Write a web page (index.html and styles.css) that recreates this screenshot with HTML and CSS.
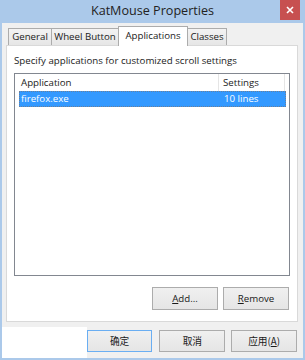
FILE: index.html
```html
<!DOCTYPE html>
<html lang="en">
<head>
  <meta charset="UTF-8" />
  <title>KatMouse Properties</title>
  <link rel="stylesheet" href="styles.css">
</head>
<body>
  <div class="window">
    <div class="titlebar">
      <span class="title">KatMouse Properties</span>
      <button class="close" aria-label="Close">
        <svg width="8" height="8" viewBox="0 0 8 8"><path d="M1 1 L7 7 M7 1 L1 7" stroke="#fff" stroke-width="1.6" /></svg>
      </button>
    </div>

    <div class="client">
      <div class="tabarea">
        <div class="tabs">
          <div class="tab tab-general">General</div>
          <div class="tab tab-wheel">Wheel Button</div>
          <div class="tab tab-apps selected">Applications</div>
          <div class="tab tab-classes">Classes</div>
        </div>

        <div class="panel">
          <div class="hint">Specify applications for customized scroll settings</div>

          <div class="listview">
            <div class="lv-header">
              <div class="col-app">Application</div>
              <div class="col-set">Settings</div>
              <div class="col-rest"></div>
            </div>
            <div class="lv-row selected">
              <div class="col-app">firefox.exe</div>
              <div class="col-set">10 lines</div>
            </div>
          </div>

          <div class="panel-buttons">
            <button class="btn"><u>A</u>dd...</button>
            <button class="btn"><u>R</u>emove</button>
          </div>
        </div>
      </div>

      <div class="footer">
        <div class="blank"></div>
        <button class="btn btn-default cjk">确定</button>
        <button class="btn cjk">取消</button>
        <button class="btn cjk">应用(<u>A</u>)</button>
      </div>
    </div>
  </div>
</body>
</html>
```

FILE: styles.css
```css
body {
  margin: 0;
  font-family: "Open Sans", "Noto Sans CJK SC", sans-serif;
  font-size: 9.7px;
  color: #1a1a1a;
}
.window {
  width: 305px;
  height: 360px;
  box-sizing: border-box;
  padding: 0 2px 2px 2px;
  background-color: #abc9ea;
  display: flex;
  flex-direction: column;
}
.titlebar {
  height: 23px;
  margin: 0 -2px;
  display: flex;
  align-items: center;
  justify-content: center;
  position: relative;
}
.title {
  font-size: 12.6px;
  color: #222;
  margin-top: -2px;
}
.close {
  position: absolute;
  top: 0;
  right: 5px;
  width: 20px;
  height: 20px;
  padding: 0;
  border: none;
  background-color: #c75050;
  display: flex;
  align-items: center;
  justify-content: center;
}
.client {
  flex: 1;
  background-color: #f0f0f0;
  display: flex;
  flex-direction: column;
}
.tabarea {
  padding: 3px 5px 0 4px;
}
.tabs {
  display: flex;
  align-items: flex-end;
  height: 19px;
  padding-left: 2px;
}
.tab {
  box-sizing: border-box;
  height: 17px;
  border: 1px solid #acacac;
  border-bottom: none;
  margin-right: -1px;
  background: linear-gradient(#f3f3f3, #e6e6e6);
  text-align: center;
  line-height: 16px;
}
.tab-general { width: 44px; }
.tab-wheel { width: 68px; }
.tab-apps { width: 70px; }
.tab-classes { width: 40px; }
.tab.selected {
  height: 20px;
  margin-bottom: -1px;
  background: #fff;
  position: relative;
  z-index: 1;
  line-height: 17px;
}
.panel {
  height: 277px;
  box-sizing: border-box;
  border: 1px solid #d9d9d9;
  background-color: #fff;
  padding: 7px 7px 0 7px;
}
.hint {
  height: 15px;
  line-height: 15px;
}
.listview {
  margin-top: 5px;
  height: 203px;
  box-sizing: border-box;
  border: 1px solid #828790;
}
.lv-header {
  display: flex;
  height: 17px;
  line-height: 17px;
}
.lv-header > div {
  border-right: 1px solid #e5e5e5;
}
.col-app {
  box-sizing: border-box;
  width: 204px;
  padding-left: 6px;
}
.col-set {
  box-sizing: border-box;
  width: 66px;
  padding-left: 4px;
}
.lv-header .col-rest {
  flex: 1;
  border-right: none;
}
.lv-row {
  display: flex;
  height: 16px;
  line-height: 14px;
  margin-left: 4px;
  width: 267px;
  box-sizing: border-box;
}
.lv-row .col-app {
  width: 199px;
  padding-left: 1px;
}
.lv-row .col-set {
  padding-left: 5px;
}
.lv-row.selected {
  background-color: #3399ff;
  color: #fff;
  border: 1px dotted #6b7f99;
}
.panel-buttons {
  display: flex;
  justify-content: flex-end;
  gap: 5px;
  margin-top: 11px;
  padding-right: 1px;
}
.btn {
  box-sizing: border-box;
  width: 66px;
  height: 23px;
  padding: 0;
  border: 1px solid #acacac;
  background: linear-gradient(#f0f0f0, #e5e5e5);
  font-family: "Open Sans", "Noto Sans CJK SC", sans-serif;
  font-size: 9.7px;
  color: #1a1a1a;
}
.footer {
  flex: 1;
  display: flex;
  align-items: flex-start;
}
.blank {
  width: 85px;
  height: 31px;
  margin-top: 5px;
  background-color: #fff;
}
.footer .btn {
  height: 22px;
  margin-top: 8px;
  margin-right: 6px;
}
.footer .btn-default {
  border-color: #6aaef2;
  margin-right: 7px;
}
.cjk {
  font-family: "Noto Sans CJK SC", sans-serif;
}
```
